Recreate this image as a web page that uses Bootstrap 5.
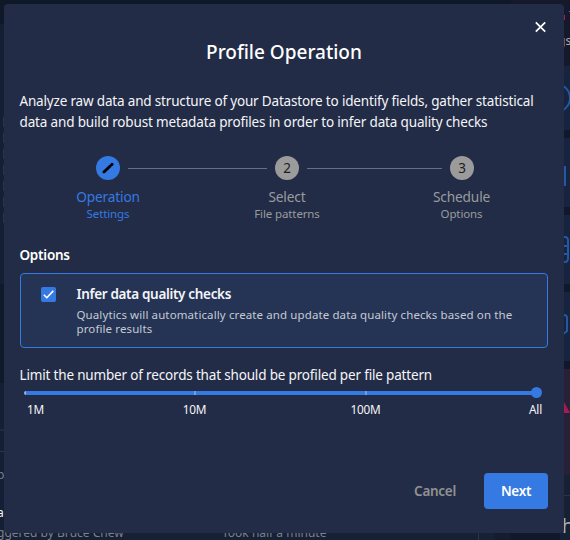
<!DOCTYPE html>
<html lang="en" data-bs-theme="dark">
<head>
<meta charset="utf-8">
<meta name="viewport" content="width=device-width, initial-scale=1">
<title>Profile Operation</title>
<link href="https://cdn.jsdelivr.net/npm/bootstrap@5.3.0/dist/css/bootstrap.min.css" rel="stylesheet">
<style>
:root { --accent: #357ae2; --panel: #232c46; --muted: #999b9f; }
body { width: 570px; height: 540px; background: #131d31; font-family: "Noto Sans", "Open Sans", sans-serif; color: #f4f5f8; font-size: 14px; line-height: 21px; }
.backdrop-page { inset: 0; z-index: 0; }
.bg-text { font-size: 12px; line-height: 16px; color: #7a808c; white-space: nowrap; }
.dialog { width: 560px; height: 529px; margin: 4px 0 0 4px; padding: 0 16px; background: var(--panel); border-radius: 4px; z-index: 1; }
.close-btn { height: 32px; padding: 17px 1px 0 0; }
.close-btn button { width: 13px; height: 12px; }
.heading { font-size: 19px; line-height: 28px; font-weight: 500; margin: 2px 0 0; }
.intro { margin: 25px 0 0 -.5px; font-size: 13.5px; letter-spacing: -.175px; white-space: nowrap; }
.intro .t + br + .t { letter-spacing: -.155px; }
.track { padding: 0 74px 0 76px; margin-top: 23px; }
.dot { width: 24px; height: 24px; background: #9b9b9b; color: #1d1d1f; font-size: 13.5px; }
.dot.active { background: var(--accent); color: #000; }
.join { height: 1px; background: #667080; margin: 1px 8px 0; }
.join-a { width: 139px; } .join-b { width: 135px; }
.labels { margin-top: 7px; color: var(--muted); }
.labels > div { text-align: center; white-space: nowrap; }
.labels .s1 { width: 176px; color: var(--accent); } .s2 { width: 182px; } .s3 { width: 167px; }
.labels strong { display: block; font-weight: 400; font-size: 13.7px; line-height: 20px; letter-spacing: -.15px; }
.labels small { display: block; font-size: 11.5px; line-height: 14px; letter-spacing: -.12px; }
.section-name { font-size: 13.5px; font-weight: 600; margin: 24px 0 0 -.5px; letter-spacing: -.25px; }
.option { height: 75px; margin-top: 8px; padding: 10px 12px 0 20px; border: 1px solid var(--accent); border-radius: 4px; background: #253455; }
.check { width: 15px; height: 15px; border-radius: 2px; background: var(--accent); margin: 3px 20.5px 0 0; }
.option-name { font-size: 13.5px; font-weight: 600; line-height: 20px; letter-spacing: -.33px; }
.option-note { font-size: 11.5px; line-height: 14px; margin-top: 4px; color: #c6cad3; white-space: nowrap; letter-spacing: .11px; }
.limit { margin: 17px 0 0 -.5px; font-size: 13.5px; letter-spacing: -.17px; white-space: nowrap; }
.slider { height: 11px; margin: 1px 6px 0 4px; }
.bar { height: 4px; background: linear-gradient(90deg,#91b6f0 0 2px,transparent 2px 170px,#6b9eed 170px 172px,transparent 172px 341px,#6b9eed 341px 343px,transparent 343px), var(--accent); border-radius: 2px; }
.knob { width: 11px; height: 11px; background: var(--accent); flex: none; margin-left: -6px; }
.ticks { display: grid; grid-template-columns: 23px 295px 47px 153px; margin: 3px 0 0 4px; font-size: 11.8px; line-height: 16px; letter-spacing: -.2px; }
.ticks span { text-align: center; }
.ticks span:nth-child(4) { text-align: right; }
.actions { margin-top: 56px; gap: 21px; }
.actions .btn { height: 36px; font-size: 13.5px; font-weight: 600; line-height: 20px; padding: 0; border: 0; border-radius: 4px; letter-spacing: -.3px; }
.btn-cancel { width: 56px; color: #929292; }
.btn-next { width: 64px; background: var(--accent); color: #fff; }
.t { display: inline-block; }
</style>
</head>
<body class="position-relative overflow-hidden">
<div class="backdrop-page position-absolute">
  <svg class="position-absolute top-0 start-0" width="570" height="540" viewBox="0 0 570 540" aria-hidden="true">
    <path fill="#10192b" d="M0 0h570v540H0z"/>
    <path fill="#0f1829" d="M0 0h511v24H0z"/><path fill="#15192b" d="M511 0h59v66h-59z"/>
    <path fill="#141f36" d="M0 24h5v260H0zM0 383h5v157H0z"/>
    <path fill="#172440" d="M560 66h10v64h-10zM560 138h10v69h-10zM560 215h10v69h-10zM560 292h10v69h-10z"/>
    <path fill="#272037" d="M560 369h10v106h-10z"/>
    <path fill="#162136" d="M560 475h10v65h-10zM0 533h495v7H0z"/>
    <path fill="#141d30" d="M495 533h16v7h-16z"/>
    <g fill="none" stroke="#2458a4" stroke-width="2"><circle cx="556" cy="98" r="14"/><path d="M556 167h9v18h-9M556 237h9q3 0 3 4v17q0 4-3 4h-9M560 246h8M560 254h8M556 315h8q3 0 3 3v13l-5 4"/></g>
    <path fill="#a21c50" d="M564 402l6 11h-6z"/><path fill="#9b2946" d="M564 15h1v5h-1z"/>
    <path stroke="#2a354c" d="M0 430h5M0 451.500h5M564 495.500h6M478.500 533v7M3.500 117v10M3.500 133v10M3.500 149v10M3.500 165v10M3.500 181v10M3.500 197v10M3.500 213v10"/>
  </svg>
  <div class="bg-text position-absolute" style="left:-3px;top:467px">p</div>
  <div class="bg-text position-absolute text-light" style="left:-3px;top:505px">a</div>
  <div class="bg-text position-absolute" style="left:-3px;top:525px">ggered by Bruce Chew</div>
  <div class="bg-text position-absolute" style="left:222px;top:525px">Took half a minute</div>
  <div class="bg-text position-absolute" style="left:569px;top:8px;color:#626fe2">T</div>
  <div class="bg-text position-absolute" style="left:558px;top:33px;color:#a5a9b5">gs</div>
  <div class="bg-text position-absolute" style="left:562px;top:514px;font-size:19px;line-height:24px;color:#a7afbd">h</div>
</div>
<main class="dialog position-relative d-flex flex-column">
  <div class="close-btn d-flex justify-content-end">
    <button class="btn p-0 border-0 d-flex" aria-label="Close"><svg width="13" height="12" viewBox="0 0 13 12"><path d="M1.800 1.300l9.400 9.400m0-9.400l-9.400 9.400" stroke="#fff" stroke-width="1.700"/></svg></button>
  </div>
  <h1 class="heading text-center"><span class="t">Profile Operation</span></h1>
  <p class="intro"><span class="t">Analyze raw data and structure of your Datastore to identify fields, gather statistical</span><br><span class="t">data and build robust metadata profiles in order to infer data quality checks</span></p>
  <div class="track d-flex align-items-center">
    <span class="dot active rounded-circle d-flex align-items-center justify-content-center"><svg width="12" height="12" viewBox="0 0 12 12"><g fill="none" stroke="#000" stroke-width="2.900" stroke-linecap="round"><path d="M2.200 9.800l6-5.800M10 2.400l.1-.1"/></g><path d="M.7 11.300l.2-2.800 2.500 2.500z"/></svg></span>
    <span class="join join-a"></span>
    <span class="dot rounded-circle d-flex align-items-center justify-content-center">2</span>
    <span class="join join-b"></span>
    <span class="dot rounded-circle d-flex align-items-center justify-content-center">3</span>
  </div>
  <div class="labels d-flex">
    <div class="s1"><strong>Operation</strong><small>Settings</small></div>
    <div class="s2"><strong>Select</strong><small>File patterns</small></div>
    <div class="s3"><strong>Schedule</strong><small>Options</small></div>
  </div>
  <h2 class="section-name lh-base">Options</h2>
  <div class="option d-flex">
    <span class="check d-flex flex-shrink-0"><svg width="15" height="15" viewBox="0 0 15 15"><path d="M2.800 7.700l3 3 6.500-6.800" fill="none" stroke="#fff" stroke-width="1.600"/></svg></span>
    <div>
      <div class="option-name"><span class="t">Infer data quality checks</span></div>
      <div class="option-note"><span class="t">Qualytics will automatically create and update data quality checks based on the</span><br><span class="t">profile results</span></div>
    </div>
  </div>
  <div class="limit"><span class="t">Limit the number of records that should be profiled per file pattern</span></div>
  <div class="slider d-flex align-items-center"><span class="bar flex-grow-1"></span><span class="knob rounded-circle"></span></div>
  <div class="ticks"><span>1M</span><span>10M</span><span>100M</span><span>All</span></div>
  <div class="actions d-flex justify-content-end">
    <button class="btn btn-cancel">Cancel</button>
    <button class="btn btn-next">Next</button>
  </div>
</main>
<script src="https://cdn.jsdelivr.net/npm/bootstrap@5.3.0/dist/js/bootstrap.bundle.min.js"></script>
</body>
</html>
